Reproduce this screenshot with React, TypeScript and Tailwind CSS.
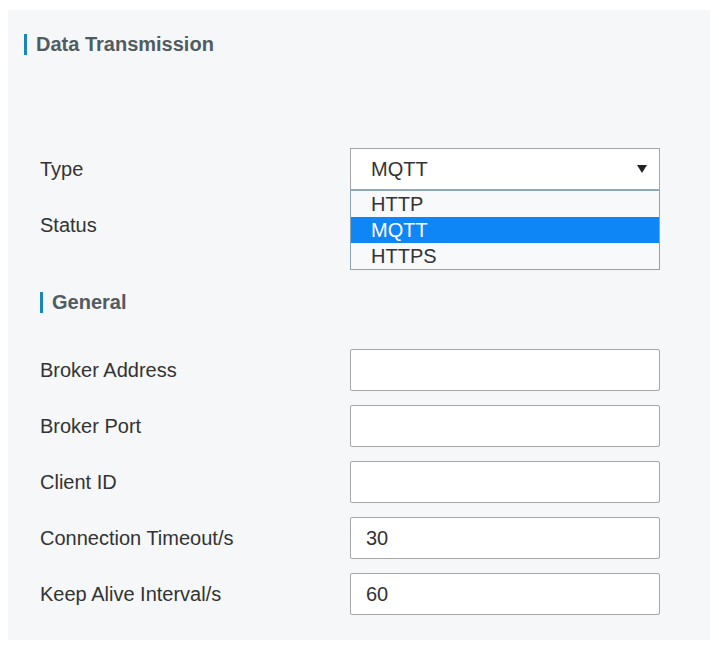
const rows = [
  { label: "Broker Address", value: "" },
  { label: "Broker Port", value: "" },
  { label: "Client ID", value: "" },
  { label: "Connection Timeout/s", value: "30" },
  { label: "Keep Alive Interval/s", value: "60" },
];

const options = ["HTTP", "MQTT", "HTTPS"];

function SectionTitle({ title }: { title: string }) {
  return (
    <div className="flex items-center h-[22px]">
      <span className="w-[3px] h-[21px] bg-[#1b86b9]" />
      <span className="ml-[9px] text-[20px] font-bold text-[#505c62]">
        {title}
      </span>
    </div>
  );
}

function TypeSelect() {
  const selected = "MQTT";
  return (
    <div className="relative w-[310px]">
      <div className="h-[42px] bg-white border border-[#a6a6a6] flex items-center justify-between pl-[20px] pr-[12px]">
        <span className="text-[20px] text-[#333]">{selected}</span>
        <svg width="10" height="8" viewBox="0 0 10 8">
          <path d="M0 0h10L5 8z" fill="#222" />
        </svg>
      </div>
      <ul className="absolute left-0 top-[42px] w-full bg-[#f7f9fa] border border-[#8aa3b5] z-10">
        {options.map((o) => (
          <li
            key={o}
            className={
              o === selected
                ? "h-[26px] leading-[26px] pl-[20px] text-[20px] bg-[#0f86f5] text-white"
                : "h-[26px] leading-[26px] pl-[20px] text-[20px] text-[#333]"
            }
          >
            {o}
          </li>
        ))}
      </ul>
    </div>
  );
}

export default function App() {
  return (
    <div className="w-[719px] h-[647px] bg-white pt-[10px] pl-[8px] font-['Liberation_Sans',Arial,sans-serif]">
      <div className="w-[702px] h-[630px] bg-[#f5f7f8] pl-[16px] pt-[23px]">
        <SectionTitle title="Data Transmission" />

        <div className="pl-[16px] mt-[93px] flex flex-col gap-[14px]">
          <div className="flex items-center">
            <span className="w-[310px] text-[20px] text-[#333]">Type</span>
            <TypeSelect />
          </div>
          <div className="flex items-center h-[42px]">
            <span className="w-[310px] text-[20px] text-[#333]">Status</span>
          </div>
        </div>

        <div className="pl-[16px] mt-[45px]">
          <SectionTitle title="General" />
        </div>

        <div className="pl-[16px] mt-[36px] flex flex-col gap-[14px]">
          {rows.map((r) => (
            <div key={r.label} className="flex items-center">
              <span className="w-[310px] text-[20px] text-[#333]">{r.label}</span>
              <div className="w-[310px] h-[42px] bg-white border border-[#a6a6a6] rounded-[2px] flex items-center pl-[15px] text-[20px] text-[#333]">
                {r.value}
              </div>
            </div>
          ))}
        </div>
      </div>
    </div>
  );
}
